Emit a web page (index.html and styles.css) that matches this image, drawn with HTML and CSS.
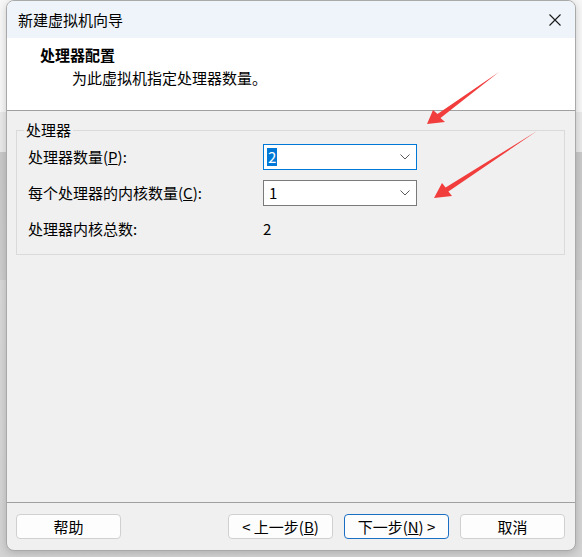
FILE: index.html
```html
<!DOCTYPE html>
<html lang="zh-CN">
<head>
<meta charset="utf-8">
<title>新建虚拟机向导</title>
<link rel="stylesheet" href="styles.css">
</head>
<body>
<div class="screen">
  <div class="window">
    <div class="titlebar">
      <span class="title">新建虚拟机向导</span>
      <svg class="close" width="12" height="12" viewBox="0 0 12 12"><path d="M0.5 0.5 L11.5 11.5 M11.5 0.5 L0.5 11.5" stroke="#1a1a1a" stroke-width="1.1" fill="none"/></svg>
    </div>
    <div class="header">
      <div class="h-title">处理器配置</div>
      <div class="h-sub">为此虚拟机指定处理器数量。</div>
    </div>
    <div class="body">
      <div class="group">
        <div class="legend">处理器</div>
        <div class="grid">
          <div class="label">处理器数量(<u>P</u>):</div>
          <div class="combo focused"><span class="sel">2</span>
            <svg class="chev" width="10" height="6" viewBox="0 0 10 6"><path d="M0.5 0.5 L5 5 L9.5 0.5" stroke="#5a5a5a" fill="none" stroke-width="1"/></svg>
          </div>
          <div class="label">每个处理器的内核数量(<u>C</u>):</div>
          <div class="combo"><span class="val">1</span>
            <svg class="chev" width="10" height="6" viewBox="0 0 10 6"><path d="M0.5 0.5 L5 5 L9.5 0.5" stroke="#5a5a5a" fill="none" stroke-width="1"/></svg>
          </div>
          <div class="label">处理器内核总数:</div>
          <div class="static">2</div>
        </div>
      </div>
    </div>
    <div class="footer">
      <button class="btn">帮助</button>
      <div class="spacer"></div>
      <button class="btn">&lt; 上一步(<u>B</u>)</button>
      <button class="btn primary">下一步(<u>N</u>) &gt;</button>
      <button class="btn">取消</button>
    </div>
  </div>
  <svg class="arrows" width="582" height="557" viewBox="0 0 582 557">
    <polygon points="499,72 440.5,118 445,122 427,124 433,110 437.5,114" fill="#f23d3d"/>
    <polygon points="537,131 448.4,191.6 452,196 434,198 442,183 445.6,187.4" fill="#f23d3d"/>
  </svg>
</div>
</body>
</html>
```
FILE: styles.css
```css
* { box-sizing: border-box; }
html, body { margin: 0; padding: 0; }
body {
  font-family: "Noto Sans CJK SC", "Noto Sans", sans-serif;
  font-size: 15px;
  color: #000;
}
.screen {
  position: relative;
  width: 582px;
  height: 557px;
  overflow: hidden;
  padding-left: 6px;
  background: linear-gradient(to bottom, #f7f7f7 0, #f7f7f7 112px, #e9e9e9 112px, #e9e9e9 152px, #c9c9c9 152px, #cdcdcd 280px, #d8d8d8 280px, #d3d3d3 557px);
}
.window {
  width: 570px;
  height: 551px;
  border: 1px solid #a9a9a9;
  border-radius: 8px;
  background: #f0f0f0;
  display: flex;
  flex-direction: column;
  overflow: hidden;
  box-shadow: 0 2px 8px rgba(0,0,0,0.18);
}
.titlebar {
  height: 37px;
  flex: none;
  background: #eef4f9;
  display: flex;
  align-items: center;
  justify-content: space-between;
  padding: 0 14px 0 11px;
}
.title { line-height: 20px; margin-top: 1px; }
.close { display: block; margin-top: 1px; }
.header {
  height: 73px;
  flex: none;
  background: #fff;
  border-bottom: 1px solid #a0a0a0;
  padding: 7px 0 0 33px;
}
.h-title { font-weight: bold; line-height: 20px; }
.h-sub { line-height: 20px; margin-top: 3px; padding-left: 32px; }
.body {
  flex: 1;
  padding-top: 19px;
}
.group {
  margin: 0 10px 0 9px;
  border: 1px solid #dadada;
  padding: 0 0 12px 11px;
}
.legend {
  margin: -11px 0 0 -4px;
  padding: 0 2px;
  width: fit-content;
  line-height: 20px;
  background: #f0f0f0;
}
.grid {
  margin-top: 4px;
  display: grid;
  grid-template-columns: 235px 154px;
  grid-auto-rows: 26px;
  row-gap: 10px;
  align-items: center;
}
.label { line-height: 20px; }
.combo {
  height: 26px;
  border: 1px solid #7a7a7a;
  background: #fff;
  display: flex;
  align-items: center;
  justify-content: space-between;
  padding: 0 6px 0 3px;
}
.combo.focused { border-color: #0078d7; }
.sel {
  background: #0078d7;
  color: #fff;
  line-height: 18px;
  padding: 0 1px;
}
.val { line-height: 18px; padding-left: 2px; }
.chev { display: block; }
.static { line-height: 20px; }
.footer {
  height: 48px;
  flex: none;
  border-top: 1px solid #a0a0a0;
  display: flex;
  align-items: flex-start;
  gap: 11px;
  padding: 11px 10px 0 9px;
}
.spacer { flex: 1; }
.btn {
  width: 105px;
  height: 25px;
  border: 1px solid #d0d0d0;
  border-radius: 4px;
  background: #fdfdfd;
  font: inherit;
  font-size: 15px;
  line-height: 20px;
  padding: 0;
  color: #000;
}
.btn.primary { border-color: #1a6fc4; }
.arrows {
  position: absolute;
  left: 0;
  top: 0;
  pointer-events: none;
}
```
